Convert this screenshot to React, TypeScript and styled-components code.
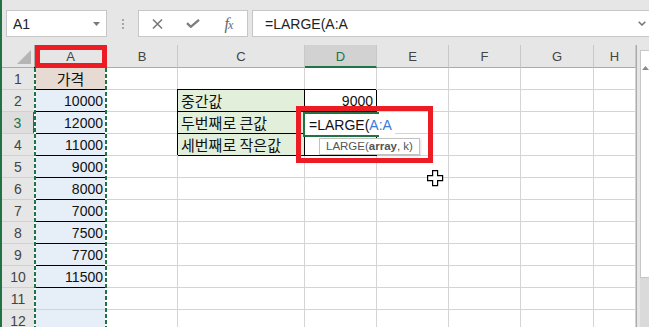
import styled, { createGlobalStyle } from 'styled-components';

const UI = `"Liberation Sans", "Noto Sans CJK KR", sans-serif`;
const KR = `"Noto Sans CJK KR", "Liberation Sans", sans-serif`;
const GREEN = '#217346';
const RED = '#ed1c24';

const GlobalStyle = createGlobalStyle`
  html, body { margin: 0; padding: 0; background: #fff; }
  body { width: 649px; height: 327px; overflow: hidden; }
`;

const Window = styled.div`
  position: relative;
  width: 649px;
  height: 327px;
  box-sizing: border-box;
  border-left: 2px solid ${GREEN};
  overflow: hidden;
  display: flex;
  flex-direction: column;
  background: #fff;
  font-family: ${UI};
`;

/* ---------- formula bar ---------- */

const Toolbar = styled.div`
  height: 45px;
  flex: none;
  background: #e6e6e6;
  display: flex;
  align-items: flex-start;
  padding: 10px 0 0 4px;
  box-sizing: border-box;
`;

const Box = styled.div`
  height: 27px;
  box-sizing: border-box;
  background: #fff;
  border: 1px solid #c6c6c6;
  display: flex;
  align-items: center;
`;

const NameBox = styled(Box)`
  width: 101px;
  padding: 0 6px;
  justify-content: space-between;
  font-size: 14px;
  color: #222;
`;

const Grip = styled.div`
  width: 31px;
  height: 27px;
  display: flex;
  flex-direction: column;
  align-items: center;
  justify-content: center;
  gap: 2px;

  span {
    width: 2px;
    height: 2px;
    background: #a6a6a6;
  }
`;

const Buttons = styled(Box)`
  width: 110px;
  padding: 0 1px;
`;

const IconSlot = styled.div`
  width: 36px;
  display: flex;
  justify-content: center;
  align-items: center;
  color: #6f6f6f;
`;

const Fx = styled.span`
  font-family: "Liberation Serif", serif;
  font-style: italic;
  font-size: 16px;
  color: #666;
  letter-spacing: -1px;

  small {
    font-size: 12px;
  }
`;

const Formula = styled(Box)`
  flex: 1;
  margin: 0 -10px 0 4px;
  padding: 0 12px;
  justify-content: space-between;
  font-size: 14px;
  color: #222;
`;

/* ---------- sheet ---------- */

const Sheet = styled.div`
  flex: 1;
  min-height: 0;
  display: flex;
  align-items: flex-start;
`;

const WIDTHS = [33, 72, 71, 127, 72, 72, 72, 73, 42];

const Grid = styled.div`
  flex: none;
  width: 634px;
  display: grid;
  grid-template-columns: ${WIDTHS.map((w) => `${w}px`).join(' ')};
  grid-template-rows: 23px;
  grid-auto-rows: 22px;
`;

const Corner = styled.div`
  background: #e6e6e6;
  border-right: 1px solid #ababab;
  border-bottom: 1px solid #ababab;
  box-sizing: border-box;
  display: flex;
  align-items: flex-end;
  justify-content: flex-end;
  padding: 0 3px 3px 0;
`;

const ColHead = styled.div<{ $active?: boolean }>`
  box-sizing: border-box;
  background: ${(p) => (p.$active ? '#d2d2d2' : '#e6e6e6')};
  color: ${(p) => (p.$active ? GREEN : '#444')};
  border-right: 1px solid #c8c8c8;
  border-bottom: ${(p) => (p.$active ? `2px solid ${GREEN}` : '1px solid #ababab')};
  display: flex;
  align-items: center;
  justify-content: center;
  font-size: 13px;
  padding-top: 1px;
`;

const RowHead = styled.div<{ $active?: boolean }>`
  box-sizing: border-box;
  background: ${(p) => (p.$active ? '#dedede' : '#e6e6e6')};
  color: ${(p) => (p.$active ? GREEN : '#444')};
  border-right: ${(p) => (p.$active ? `2px solid ${GREEN}` : '1px solid #ababab')};
  border-bottom: 1px solid #d0d0d0;
  display: flex;
  align-items: flex-end;
  justify-content: center;
  padding-bottom: 2px;
  font-size: 14px;
`;

type Align = 'left' | 'right' | 'center';

const Cell = styled.div<{ $bg?: string; $align?: Align; $boxed?: boolean; $kr?: boolean }>`
  box-sizing: border-box;
  background: ${(p) => p.$bg ?? '#fff'};
  border-right: 1px solid ${(p) => (p.$boxed ? '#000' : '#d4d4d4')};
  border-bottom: 1px solid ${(p) => (p.$boxed ? '#000' : '#d4d4d4')};
  box-shadow: ${(p) => (p.$boxed ? '-1px -1px 0 0 #000' : 'none')};
  display: flex;
  align-items: flex-end;
  justify-content: ${(p) =>
    p.$align === 'right' ? 'flex-end' : p.$align === 'center' ? 'center' : 'flex-start'};
  padding: 0 3px ${(p) => (p.$kr ? '0' : '2px')};
  font-family: ${(p) => (p.$kr ? KR : UI)};
  font-size: ${(p) => (p.$kr ? '15px' : '14px')};
  line-height: ${(p) => (p.$kr ? '20px' : '16px')};
  color: #111;
  white-space: nowrap;
  overflow: hidden;
`;

const Scrollbar = styled.div`
  width: 17px;
  flex: none;
  align-self: stretch;
  box-sizing: border-box;
  border-left: 1px solid #ababab;
  background: #e6e6e6;
  padding: 5px 0 0 3px;
  display: flex;
  flex-direction: column;
`;

const Thumb = styled.div`
  height: 228px;
  flex: none;
  box-sizing: border-box;
  background: #fff;
  border: 1px solid #c6c6c6;
  padding: 5px 0 0 1px;
`;

const Track = styled.div`
  flex: 1;
  background: #dadada;
`;

/* ---------- overlays ---------- */

const CopyMarquee = styled.div`
  position: absolute;
  left: 32px;
  top: 68px;
  width: 73px;
  height: 260px;
  background-image: repeating-linear-gradient(to bottom, ${GREEN} 0 4px, #fff 4px 6px),
    repeating-linear-gradient(to bottom, ${GREEN} 0 4px, #fff 4px 6px);
  background-size: 2px 100%, 2px 100%;
  background-position: left top, right top;
  background-repeat: no-repeat;
`;

const Mark = styled.div<{ $w: number }>`
  position: absolute;
  box-sizing: border-box;
  border: ${(p) => p.$w}px solid ${RED};
`;

const ActiveFrame = styled.div`
  position: absolute;
  left: 301px;
  top: 112px;
  width: 76px;
  height: 25px;
  box-sizing: border-box;
  border: 2px solid ${GREEN};
`;

const Editor = styled.div`
  position: absolute;
  left: 303px;
  top: 114px;
  height: 21px;
  box-sizing: border-box;
  padding: 3px 3px 0 4px;
  background: #fff;
  font-size: 14px;
  line-height: 16px;
  color: #111;
  white-space: nowrap;

  span {
    color: #3b7ad9;
  }
`;

const Tooltip = styled.div`
  position: absolute;
  left: 317px;
  top: 138px;
  height: 17px;
  box-sizing: border-box;
  padding: 0 6px;
  background: #fff;
  border: 1px solid #c2c2c2;
  box-shadow: 1px 1px 2px rgba(0, 0, 0, 0.12);
  font-size: 11.5px;
  line-height: 15px;
  color: #555;
  white-space: nowrap;
`;

const Cursor = styled.svg`
  position: absolute;
  left: 425px;
  top: 170px;
`;

const HEADERS = ['A', 'B', 'C', 'D', 'E', 'F', 'G', 'H'];
const PRICES = ['10000', '12000', '11000', '9000', '8000', '7000', '7500', '7700', '11500'];
const LABELS: Record<number, string> = { 2: '중간값', 3: '두번째로 큰값', 4: '세번째로 작은값' };

const renderRow = (r: number) => {
  const cells = [];
  for (let c = 0; c < 8; c++) {
    const key = `${r}-${c}`;
    if (c === 0) {
      if (r === 1) {
        cells.push(
          <Cell key={key} $bg="#e7dad3" $align="center" $boxed $kr>
            가격
          </Cell>
        );
      } else {
        const v = PRICES[r - 2];
        cells.push(
          <Cell key={key} $bg="#e6eef8" $align="right" $boxed={r <= 10}>
            {v ?? ''}
          </Cell>
        );
      }
    } else if (c === 2 && LABELS[r]) {
      cells.push(
        <Cell key={key} $bg="#e2efda" $boxed $kr>
          {LABELS[r]}
        </Cell>
      );
    } else if (c === 3 && r >= 2 && r <= 4) {
      cells.push(
        <Cell key={key} $align="right" $boxed>
          {r === 2 ? '9000' : ''}
        </Cell>
      );
    } else {
      cells.push(<Cell key={key} />);
    }
  }
  return cells;
};

export default function App() {
  const rows = Array.from({ length: 12 }, (_, i) => i + 1);
  return (
    <>
      <GlobalStyle />
      <Window>
        <Toolbar>
          <NameBox>
            <span>A1</span>
            <svg width="7" height="4" viewBox="0 0 7 4">
              <path d="M0 0h7L3.5 4z" fill="#7a7a7a" />
            </svg>
          </NameBox>
          <Grip>
            <span />
            <span />
            <span />
          </Grip>
          <Buttons>
            <IconSlot>
              <svg width="11" height="10" viewBox="0 0 11 10">
                <path d="M1 0.5l9 9M10 0.5l-9 9" stroke="#777" strokeWidth="1.5" fill="none" />
              </svg>
            </IconSlot>
            <IconSlot>
              <svg width="14" height="9" viewBox="0 0 14 9">
                <path d="M1 4.2l3.8 3.6L13 0.8" stroke="#7d7d7d" strokeWidth="2.3" fill="none" />
              </svg>
            </IconSlot>
            <IconSlot>
              <Fx>
                f<small>x</small>
              </Fx>
            </IconSlot>
          </Buttons>
          <Formula>
            <span>=LARGE(A:A</span>
            <svg width="8" height="5" viewBox="0 0 8 5">
              <path d="M0.7 0.7L4 4l3.3-3.3" stroke="#777" strokeWidth="1.6" fill="none" />
            </svg>
          </Formula>
        </Toolbar>

        <Sheet>
          <Grid>
            <Corner>
              <svg width="14" height="14" viewBox="0 0 14 14">
                <path d="M14 0v14H0z" fill="#b5b5b5" />
              </svg>
            </Corner>
            {HEADERS.map((h) => (
              <ColHead key={h} $active={h === 'D'}>
                {h}
              </ColHead>
            ))}
            {rows.map((r) => [
              <RowHead key={`h${r}`} $active={r === 3}>
                {r}
              </RowHead>,
              ...renderRow(r),
            ])}
          </Grid>
          <Scrollbar>
            <Thumb>
              <svg width="7" height="4" viewBox="0 0 7 4">
                <path d="M3.5 0L7 4H0z" fill="#8a8a8a" />
              </svg>
            </Thumb>
            <Track />
          </Scrollbar>
        </Sheet>

        <CopyMarquee />
        <Mark $w={5} style={{ left: 33, top: 45, width: 72, height: 23 }} />
        <ActiveFrame />
        <Editor>
          =LARGE(<span>A:A</span>
        </Editor>
        <Tooltip>
          LARGE(<b>array</b>, k)
        </Tooltip>
        <Mark $w={5} style={{ left: 294, top: 106, width: 137, height: 57 }} />
        <Cursor width="17" height="17" viewBox="0 0 17 17">
          <path d="M6 1h5v5h5v5h-5v5H6v-5H1V6h5z" fill="#000" />
          <path d="M5 0h5v5h5v5h-5v5H5v-5H0V5h5z" fill="#fff" stroke="#000" strokeWidth="1.2" transform="translate(0.6 0.6)" />
        </Cursor>
      </Window>
    </>
  );
}
